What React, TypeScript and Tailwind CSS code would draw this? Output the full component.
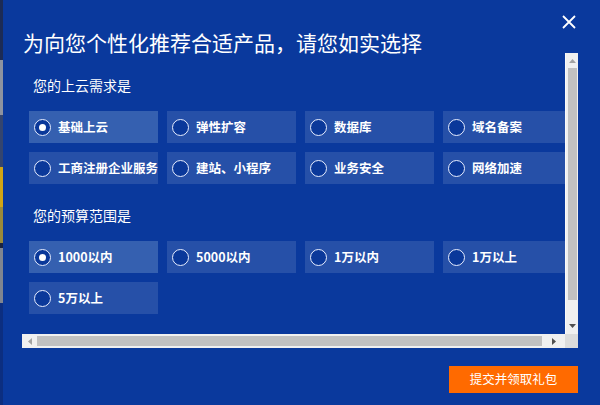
import React, { useState } from 'react';

type Option = { id: string; label: string };

const needs: Option[] = [
  { id: 'basic', label: '基础上云' },
  { id: 'elastic', label: '弹性扩容' },
  { id: 'db', label: '数据库' },
  { id: 'domain', label: '域名备案' },
  { id: 'biz', label: '工商注册企业服务' },
  { id: 'site', label: '建站、小程序' },
  { id: 'security', label: '业务安全' },
  { id: 'cdn', label: '网络加速' },
];

const budgets: Option[] = [
  { id: 'b1', label: '1000以内' },
  { id: 'b2', label: '5000以内' },
  { id: 'b3', label: '1万以内' },
  { id: 'b4', label: '1万以上' },
  { id: 'b5', label: '5万以上' },
];

const RadioCard = ({ label, checked, onClick }: { label: string; checked: boolean; onClick: () => void }) => (
  <button
    onClick={onClick}
    className={`h-[32px] flex items-center pl-[5px] text-left ${checked ? 'bg-[#3560b0]' : 'bg-[#2650a8]'}`}
  >
    <span className="w-[17px] h-[17px] shrink-0 rounded-full border-[1.5px] border-[#e8eeff] bg-[#0a389a] flex items-center justify-center">
      {checked && <span className="w-[7px] h-[7px] rounded-full bg-white" />}
    </span>
    <span className="ml-[7px] text-[12.5px] leading-none font-bold text-white whitespace-nowrap">{label}</span>
  </button>
);

const OptionGrid = ({ items, value, onChange }: { items: Option[]; value: string; onChange: (id: string) => void }) => (
  <div className="mt-[16px] ml-[7px] grid grid-cols-[repeat(4,129px)] gap-[9px]">
    {items.map((o) => (
      <RadioCard key={o.id} label={o.label} checked={value === o.id} onClick={() => onChange(o.id)} />
    ))}
  </div>
);

// scrollbar arrow triangles
const Tri = ({ dir, color }: { dir: 'up' | 'down' | 'left' | 'right'; color: string }) => {
  const pts = {
    up: '0,4 3.5,0 7,4',
    down: '0,0 3.5,4 7,0',
    left: '4,0 0,3.5 4,7',
    right: '0,0 4,3.5 0,7',
  }[dir];
  const vertical = dir === 'up' || dir === 'down';
  return (
    <svg width={vertical ? 7 : 4} height={vertical ? 4 : 7} viewBox={vertical ? '0 0 7 4' : '0 0 4 7'}>
      <polygon points={pts} fill={color} />
    </svg>
  );
};

export default function App() {
  const [need, setNeed] = useState('basic');
  const [budget, setBudget] = useState('b1');

  return (
    <div className="w-[600px] h-[405px] flex overflow-hidden bg-[#0a399d] font-['Noto_Sans_CJK_SC','Noto_Sans',sans-serif]">
      {/* page peeking out behind the dialog */}
      <div className="w-[3px] shrink-0 flex flex-col">
        <div className="h-[60px] bg-[#1c2b55]" />
        <div className="h-[55px] bg-[#8d93a0]" />
        <div className="h-[52px] bg-[#34456e]" />
        <div className="h-[40px] bg-[#d0a516]" />
        <div className="h-[36px] bg-[#9a8a3a]" />
        <div className="h-[5px] bg-[#1a2440]" />
        <div className="h-[55px] bg-[#7f8590]" />
        <div className="flex-1 bg-[#0c2e80]" />
      </div>

      <div className="flex-1 min-w-0 flex flex-col pl-[19px] pr-[22px]">
        <div className="h-[53px] flex justify-between items-start">
          <h1 className="mt-[31px] pl-[1px] text-[21px] leading-[22px] font-normal text-white whitespace-nowrap">
            为向您个性化推荐合适产品，请您如实选择
          </h1>
          <button className="mt-[15px] mr-[2px] w-[14px] h-[14px]">
            <svg width="14" height="14" viewBox="0 0 14 14">
              <path d="M1 1L13 13M13 1L1 13" stroke="white" strokeWidth="1.8" />
            </svg>
          </button>
        </div>

        <div className="h-[295px] flex flex-col">
          <div className="h-[281px] flex">
            <div className="flex-1 min-w-0 overflow-hidden pt-[22px]">
              <div className="pl-[11px] h-[20px] text-[14px] leading-[20px] text-white">您的上云需求是</div>
              <OptionGrid items={needs} value={need} onChange={setNeed} />
              <div className="mt-[21px] pl-[11px] h-[20px] text-[14px] leading-[20px] text-white">您的预算范围是</div>
              <OptionGrid items={budgets} value={budget} onChange={setBudget} />
            </div>

            {/* vertical scrollbar */}
            <div className="w-[13px] shrink-0 bg-[#f0f0f0] flex flex-col items-center border-l border-[#fafafa]">
              <div className="h-[15px] flex items-center justify-center">
                <Tri dir="up" color="#a3a3a3" />
              </div>
              <div className="w-[9px] h-[232px] bg-[#c1c1c1]" />
              <div className="flex-1" />
              <div className="h-[16px] flex items-center justify-center">
                <Tri dir="down" color="#505050" />
              </div>
            </div>
          </div>

          {/* horizontal scrollbar */}
          <div className="h-[14px] flex">
            <div className="flex-1 min-w-0 bg-[#f0f0f0] flex items-center">
              <div className="w-[15px] flex items-center justify-center">
                <Tri dir="left" color="#a3a3a3" />
              </div>
              <div className="w-[505px] h-[10px] bg-[#c1c1c1]" />
              <div className="flex-1 flex items-center justify-center">
                <Tri dir="right" color="#505050" />
              </div>
            </div>
            <div className="w-[13px] shrink-0 bg-[#dcdcdc]" />
          </div>
        </div>

        <button className="mt-[18px] self-end w-[129px] h-[27px] bg-[#ff6a00] text-white text-[12.5px] leading-none">
          提交并领取礼包
        </button>
      </div>
    </div>
  );
}
